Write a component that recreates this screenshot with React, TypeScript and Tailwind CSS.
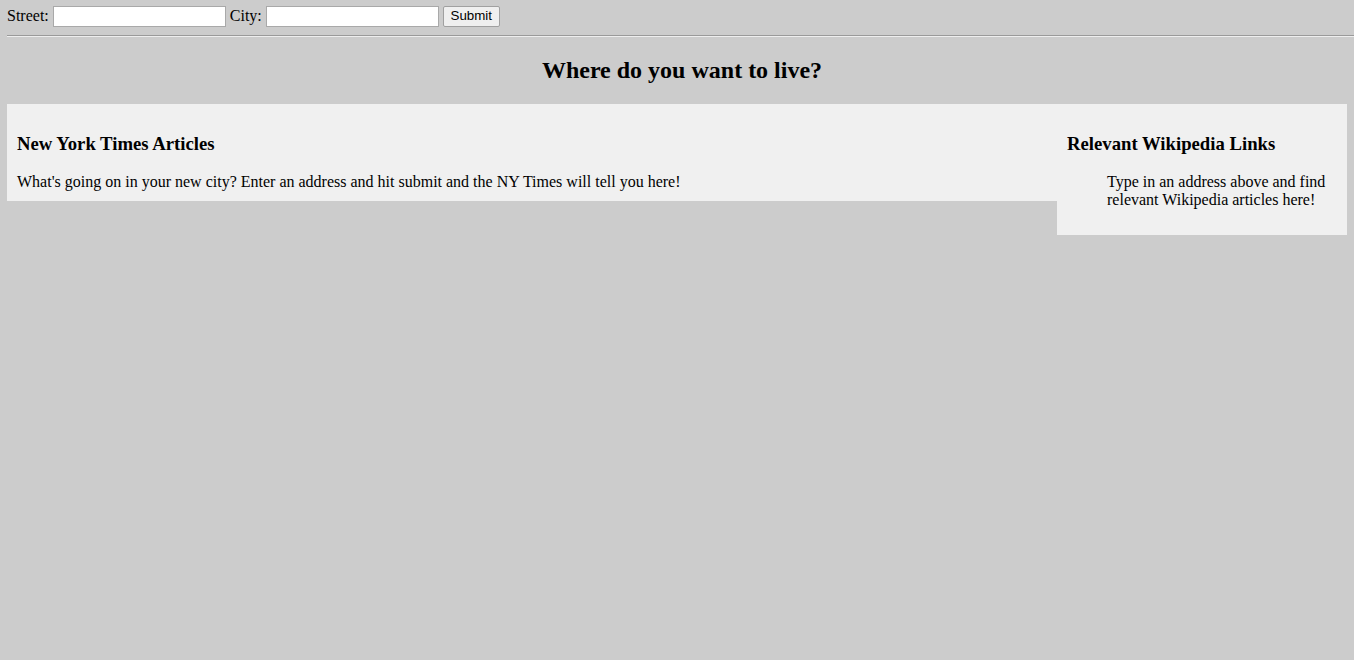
import React from "react";

export default function App() {
  return (
    <div className="min-h-[660px] bg-[#cccccc] px-[7px] text-[16px] text-black font-['Liberation_Serif',serif] overflow-hidden">
      <form className="flex items-center h-[33px] pb-[1px]" onSubmit={(e) => e.preventDefault()}>
        <label className="leading-[18px]">Street:</label>
        <input
          type="text"
          className="ml-[4px] w-[173px] h-[21px] bg-white border border-[#a9a9a9] outline-none px-[2px] text-[13px]"
        />
        <label className="ml-[4px] leading-[18px]">City:</label>
        <input
          type="text"
          className="ml-[4px] w-[173px] h-[21px] bg-white border border-[#a9a9a9] outline-none px-[2px] text-[13px]"
        />
        <button
          type="submit"
          className="ml-[4px] w-[57px] h-[21px] bg-[#efefef] border border-[#a0a0a0] rounded-[2px] text-[13.33px] font-['Liberation_Sans',Arial,sans-serif] leading-none"
        >
          Submit
        </button>
      </form>
      <div className="mr-[-7px] mt-[2px] border-t border-t-[#9a9a9a] border-b border-b-[#eeeeee]" />
      <h2 className="text-center text-[24px] font-bold leading-[28px] mt-[19px] mb-[20px] pl-[10px]">
        Where do you want to live?
      </h2>
      <div className="flex items-start">
        <div className="flex-1 bg-[#f0f0f0] pt-[10px] px-[10px] pb-[10px]">
          <h3 className="text-[18.72px] font-bold leading-[22px] mt-[18.72px] mb-[18.72px]">
            New York Times Articles
          </h3>
          <p className="leading-[18px]">
            What's going on in your new city? Enter an address and hit submit and the NY Times will tell you here!
          </p>
        </div>
        <div className="w-[290px] bg-[#f0f0f0] pt-[10px] px-[10px] pb-[10px]">
          <h3 className="text-[18.72px] font-bold leading-[22px] mt-[18.72px] mb-[18.72px]">
            Relevant Wikipedia Links
          </h3>
          <ul className="pl-[40px] mb-[16px] leading-[18px] list-none">
            <li>Type in an address above and find relevant Wikipedia articles here!</li>
          </ul>
        </div>
      </div>
    </div>
  );
}
